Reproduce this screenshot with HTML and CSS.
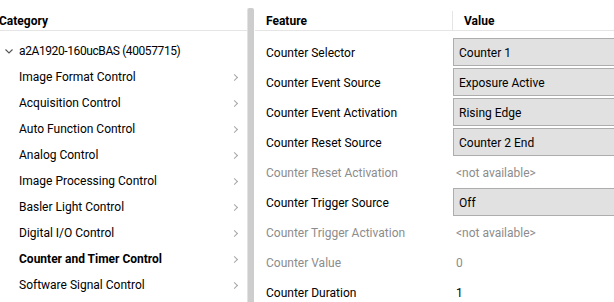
FILE: index.html
```html
<!DOCTYPE html>
<html lang="en">
<head>
    <meta charset="UTF-8">
    <title>Features - Counter and Timer Control</title>
    <link rel="stylesheet" href="styles.css">
</head>
<body>
    <div class="window">
        <div class="tree-pane">
            <div class="pane-header tree-header">Category</div>
            <ul class="tree">
                <li class="tree-root">
                    <svg class="caret-down" width="8" height="5" viewBox="0 0 8 5"><path d="M0.5 0.5 L4 4 L7.5 0.5" fill="none" stroke="#555" stroke-width="1.1"/></svg>
                    <span class="device-name">a2A1920-160ucBAS (40057715)</span>
                </li>
                <li class="tree-item">Image Format Control<span class="caret"></span></li>
                <li class="tree-item">Acquisition Control<span class="caret"></span></li>
                <li class="tree-item">Auto Function Control<span class="caret"></span></li>
                <li class="tree-item">Analog Control<span class="caret"></span></li>
                <li class="tree-item">Image Processing Control<span class="caret"></span></li>
                <li class="tree-item">Basler Light Control<span class="caret"></span></li>
                <li class="tree-item">Digital I/O Control<span class="caret"></span></li>
                <li class="tree-item selected">Counter and Timer Control<span class="caret"></span></li>
                <li class="tree-item">Software Signal Control<span class="caret"></span></li>
            </ul>
        </div>

        <div class="splitter"></div>

        <div class="feature-pane">
            <div class="pane-header feature-header">
                <div class="col-feature">Feature</div>
                <div class="col-value">Value</div>
            </div>
            <div class="features">
                <div class="feature-row">
                    <div class="col-feature">Counter Selector</div>
                    <div class="col-value"><div class="combo">Counter 1</div></div>
                </div>
                <div class="feature-row">
                    <div class="col-feature">Counter Event Source</div>
                    <div class="col-value"><div class="combo">Exposure Active</div></div>
                </div>
                <div class="feature-row">
                    <div class="col-feature">Counter Event Activation</div>
                    <div class="col-value"><div class="combo">Rising Edge</div></div>
                </div>
                <div class="feature-row">
                    <div class="col-feature">Counter Reset Source</div>
                    <div class="col-value"><div class="combo">Counter 2 End</div></div>
                </div>
                <div class="feature-row disabled">
                    <div class="col-feature">Counter Reset Activation</div>
                    <div class="col-value"><span class="plain">&lt;not available&gt;</span></div>
                </div>
                <div class="feature-row">
                    <div class="col-feature">Counter Trigger Source</div>
                    <div class="col-value"><div class="combo">Off</div></div>
                </div>
                <div class="feature-row disabled">
                    <div class="col-feature">Counter Trigger Activation</div>
                    <div class="col-value"><span class="plain">&lt;not available&gt;</span></div>
                </div>
                <div class="feature-row disabled">
                    <div class="col-feature">Counter Value</div>
                    <div class="col-value"><span class="plain">0</span></div>
                </div>
                <div class="feature-row">
                    <div class="col-feature">Counter Duration</div>
                    <div class="col-value"><span class="plain">1</span></div>
                </div>
            </div>
        </div>
    </div>
</body>
</html>
```

FILE: styles.css
```css
:root {
    --text-color: #000;
    --disabled-color: #8c8c8c;
    --line-color: #e5e5e5;
    --combo-bg: #e1e1e1;
    --combo-border: #adadad;
    --caret-color: #a6a6a6;
}

* {
    box-sizing: border-box;
}

body {
    margin: 0;
    font-family: Roboto, 'Noto Sans', sans-serif;
    font-size: 12px;
    color: var(--text-color);
    background: white;
    overflow: hidden;
}

.window {
    display: flex;
    width: 614px;
    height: 302px;
    overflow: hidden;
}

.pane-header {
    margin-top: 8px;
    height: 23px;
    padding-top: 3px;
    border-bottom: 1px solid var(--line-color);
    font-weight: bold;
    display: flex;
    align-items: center;
}

/* left: category tree */
.tree-pane {
    width: 247px;
    flex-shrink: 0;
}

.tree-header {
    text-indent: -1px;
}

.tree {
    list-style: none;
    margin: 6px 0 0;
    padding: 0;
}

.tree-root,
.tree-item {
    height: 26px;
    padding-top: 2px;
    display: flex;
    align-items: center;
    white-space: nowrap;
}

.tree-root {
    padding-left: 5px;
}

.caret-down {
    margin-right: 6px;
}

.device-name {
    letter-spacing: -0.4px;
}

.tree-item {
    padding-left: 19px;
    padding-right: 6px;
}

.tree-item.selected {
    font-weight: bold;
}

.caret {
    margin-left: auto;
    width: 5px;
    height: 5px;
    border-top: 1.3px solid var(--caret-color);
    border-right: 1.3px solid var(--caret-color);
    transform: rotate(45deg);
    margin-right: 4px;
}

.splitter {
    width: 7px;
    flex-shrink: 0;
    margin-top: 8px;
    background: #cdcdcd;
    border-left: 1px solid #e2e2e2;
    border-radius: 2px 2px 0 0;
}

/* right: feature grid */
.feature-pane {
    flex: 1;
    min-width: 0;
    padding-left: 1px;
}

.col-feature {
    width: 197px;
    flex-shrink: 0;
    padding-left: 11px;
    white-space: nowrap;
}

.col-value {
    flex: 1;
    white-space: nowrap;
}

.feature-header .col-value {
    align-self: stretch;
    display: flex;
    align-items: center;
    border-left: 1px solid var(--line-color);
    padding-left: 11px;
}

.features {
    margin-top: 6px;
}

.feature-row {
    height: 30px;
    display: flex;
    align-items: center;
}

.feature-row .col-feature,
.plain {
    padding-top: 2px;
}

.feature-row.disabled {
    color: var(--disabled-color);
}

.combo {
    height: 28px;
    margin-left: 1px;
    margin-right: -20px;
    background: var(--combo-bg);
    border: 1px solid var(--combo-border);
    display: flex;
    align-items: center;
    padding: 2px 0 0 5px;
}

.plain {
    display: inline-block;
    padding-left: 4px;
}
```
